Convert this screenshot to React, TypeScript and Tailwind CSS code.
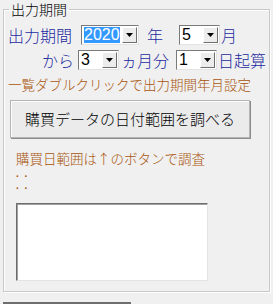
import React from "react";

const jp = "font-['MS_UI_Gothic','Noto_Sans_CJK_JP',sans-serif]";

const Combo = ({ value, w, selected }: { value: string; w: string; selected?: boolean }) => {
  return (
    <div
      className={`flex h-[20px] ${w} border border-t-[#7a7a7a] border-l-[#7a7a7a] border-r-[#e3e3e3] border-b-[#e3e3e3] bg-white`}
    >
      <div className="flex flex-1 items-center pl-[2px]">
        <span
          className={`text-[16px] leading-[16px] font-['Liberation_Sans',sans-serif] ${
            selected ? "bg-[#3399ff] text-white" : "text-black"
          }`}
        >
          {value}
        </span>
      </div>
      <div className="m-[1px] flex w-[15px] items-center justify-center border border-t-white border-l-white border-r-[#6f6f6f] border-b-[#6f6f6f] bg-[#ececec]">
        <svg width="7" height="4" viewBox="0 0 7 4">
          <path d="M0 0h7L3.5 4z" fill="#000" />
        </svg>
      </div>
    </div>
  );
};

export default function App() {
  return (
    <div className={`h-[304px] w-[273px] overflow-hidden bg-[#f0f0f0] font-light ${jp}`}>
      <div className="px-[3px] pt-[2px]">
        <fieldset className="h-[290px] border border-[#c9c9c9] shadow-[inset_1px_1px_0_#fff,1px_1px_0_#fff]">
          <legend className="ml-[5px] px-[2px] text-[14px] leading-[15px] text-black">出力期間</legend>

          <div className="mt-[8px] flex items-center text-[16px] leading-[20px] text-[#1c2aa0]">
            <span className="ml-[4px] w-[73px]">出力期間</span>
            <Combo value="2020" w="w-[58px]" selected />
            <span className="ml-[8px] w-[32px]">年</span>
            <Combo value="5" w="w-[41px]" />
            <span className="ml-[1px]">月</span>
          </div>

          <div className="mt-[5px] flex items-center text-[16px] leading-[20px] text-[#1c2aa0]">
            <span className="w-[74px] pr-[4px] text-right">から</span>
            <Combo value="3" w="w-[41px]" />
            <span className="ml-[2px] w-[55px]">ヵ月分</span>
            <Combo value="1" w="w-[41px]" />
            <span className="ml-[1px]">日起算</span>
          </div>

          <p className="ml-[4px] mt-[7px] text-[13.5px] leading-[15px] text-[#a8550c]">
            一覧ダブルクリックで出力期間年月設定
          </p>

          <button className="ml-[6px] mt-[8px] flex h-[38px] w-[240px] items-center justify-center border border-[#b4b4b4] bg-[#ebebeb] text-[15px] text-black shadow-[inset_1px_1px_0_#fcfcfc,1px_1px_0_#8c8c8c]">
            購買データの日付範囲を調べる
          </button>

          <div className="ml-[12px] mt-[10px] text-[#a8550c]">
            <p className="text-[13.5px] leading-[20px]">購買日範囲は↑のボタンで調査</p>
            <p className="font-['Liberation_Sans',sans-serif] text-[10px] font-bold leading-[12px] tracking-[1.5px]">
              . .
              <br />
              . .
            </p>
          </div>

          <div className="ml-[12px] mt-[11px] h-[78px] w-[192px] border border-t-[#6d6d6d] border-l-[#6d6d6d] border-r-[#e3e3e3] border-b-[#e3e3e3] bg-white shadow-[inset_1px_1px_0_#a0a0a0]" />
        </fieldset>
        <div className="mt-[10px] h-[2px] w-[128px] bg-[#6e6e6e]" />
      </div>
    </div>
  );
}
